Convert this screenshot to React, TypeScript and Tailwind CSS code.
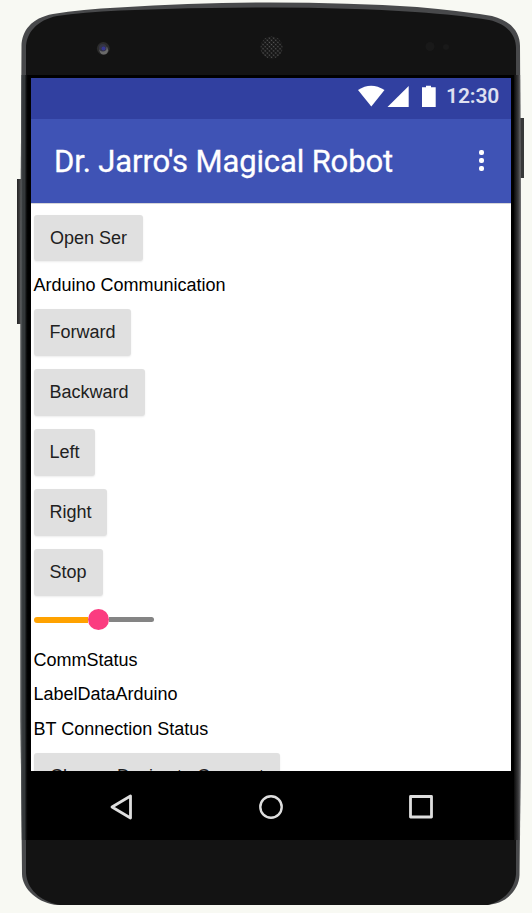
import React from 'react';

function PhoneBody() {
  return (
    <svg className="absolute inset-0" width="532" height="913" viewBox="0 0 532 913" aria-hidden="true">
      <defs>
        <linearGradient id="left" x1="0" x2="1" y1="0" y2="0">
          <stop offset="0" stopColor="#606365" />
          <stop offset="0.3" stopColor="#34383a" />
          <stop offset="0.55" stopColor="#34383a" />
          <stop offset="0.85" stopColor="#060606" />
          <stop offset="1" stopColor="#000" />
        </linearGradient>
        <linearGradient id="right" x1="0" x2="1" y1="0" y2="0">
          <stop offset="0" stopColor="#0b0b0b" />
          <stop offset="0.6" stopColor="#39393b" />
          <stop offset="1" stopColor="#747476" />
        </linearGradient>
        <linearGradient id="key" x1="0" x2="1" y1="0" y2="0">
          <stop offset="0" stopColor="#252525" />
          <stop offset="1" stopColor="#555656" />
        </linearGradient>
        <pattern id="mesh" width="3" height="3" patternUnits="userSpaceOnUse" patternTransform="rotate(45)">
          <rect width="3" height="3" fill="#151515" />
          <circle cx="1.5" cy="1.5" r="0.8" fill="#5c5c5c" />
        </pattern>
        <clipPath id="base">
          <rect width="532" height="905" />
        </clipPath>
      </defs>
      <rect x="17" y="179" width="5" height="145" fill="url(#key)" />
      <rect x="519" y="118" width="5" height="60" fill="#373838" />
      <g clipPath="url(#base)">
        <path
          d="M21.5 46 C22 31 31 18 53 14 Q82 9 119 7.500 Q195 2.500 270 2.500 Q350 2.500 417 7 Q462 11 492 16 C512 21 520 33 520 46 L521 240 V720 L519.500 875 C519 889 507 905 484 905 H58 C39 904 22 889 22 874 L20.500 720 V240 Z"
          fill="#48494b"
        />
        <path
          d="M26 48 C26 33 37 20 57 16 Q83 12 120 10.500 Q196 7.500 270 7.500 Q350 7.500 415 12 Q460 15 489 20 C508 24 516 36 516 48 L516 874 C515 890 501 905 480 906 H72 C44 906 27 891 26 873 Z"
          fill="#131313"
        />
        <path d="M21.300 75 H28 V840 H21.800 L20.500 720 V240 Z" fill="url(#left)" />
        <path d="M514 75 H520.200 L521 240 V720 L520 840 H514 Z" fill="url(#right)" />
      </g>
      <circle cx="103.300" cy="48.500" r="6.400" fill="#2b2b2b" />
      <circle cx="103.800" cy="50.300" r="4.300" fill="#6a6a6a" />
      <circle cx="102.800" cy="47.800" r="3.800" fill="#353545" />
      <circle cx="103.500" cy="48.500" r="2" fill="#363790" />
      <circle cx="271.500" cy="47.500" r="11" fill="url(#mesh)" />
      <circle cx="430" cy="46.500" r="4.500" fill="#191919" />
      <circle cx="446" cy="47" r="3" fill="#191919" />
    </svg>
  );
}

function StatusBar() {
  return (
    <div className="flex h-[41px] shrink-0 items-start justify-end bg-[#3140a0] pr-3 pt-[7px]">
      <svg width="80" height="22" viewBox="0 0 80 22" fill="#fff" className="mr-[9.5px]">
        <path d="M1 5 Q14 -3.500 27.500 5 L14.300 21.500 Z" />
        <path d="M51.700 1 V22 H30.500 Z" />
        <path d="M65 2.200 H69 V0.700 H74 V2.200 H78.700 V22 H65 Z" />
      </svg>
      <span className="w-[53px] whitespace-nowrap font-['Roboto',sans-serif] text-[21px] font-semibold leading-[23px] tracking-[-0.1px] text-[#dfe1f1]">
        12:30
      </span>
    </div>
  );
}

function TitleBar() {
  return (
    <header className="flex h-[84px] shrink-0 items-center justify-between bg-[#3f53b5] pl-[23px] pr-[27px]">
      <h1 className="mt-[2px] whitespace-nowrap font-['Roboto',sans-serif] text-[31px] leading-[36px] tracking-[-0.13px] text-white [-webkit-text-stroke:0.3px_white]">
        Dr. Jarro's Magical Robot
      </h1>
      <div className="-mt-[2px] flex flex-col gap-[3px]">
        <i className="h-[5px] w-[5px] rounded-[2px] bg-white" />
        <i className="h-[5px] w-[5px] rounded-[2px] bg-white" />
        <i className="h-[5px] w-[5px] rounded-[2px] bg-white" />
      </div>
    </header>
  );
}

function Button({ children, className }: { children: string; className: string }) {
  return (
    <button
      className={`shrink-0 whitespace-nowrap rounded-[3px] bg-[#e0e0e0] text-left text-[18px] text-[#212121] shadow-[0_1px_2px_rgba(0,0,0,0.08)] ${className}`}
    >
      {children}
    </button>
  );
}

function Label({ children, className }: { children: string; className: string }) {
  return (
    <p className={`-ml-[0.5px] shrink-0 whitespace-nowrap text-[18px] leading-[20px] text-black ${className}`}>
      {children}
    </p>
  );
}

function Slider() {
  return (
    <div className="mt-[13px] flex h-[21px] w-[120px] shrink-0 items-center">
      <div className="h-[6px] w-[54px] rounded-l-full bg-[#ffa200]" />
      <div className="size-[21px] rounded-full bg-[#fb3c80]" />
      <div className="h-[5px] flex-1 rounded-r-full bg-[#848484]" />
    </div>
  );
}

function NavBar() {
  return (
    <nav className="flex h-[69px] shrink-0 items-center justify-between bg-black px-[75px] pt-[1px]">
      <svg width="30" height="30" viewBox="0 0 30 30" fill="none" stroke="#dedede" strokeWidth="2.800" strokeLinejoin="round">
        <path d="M6 16 L24.500 5 V27 Z" />
      </svg>
      <svg width="30" height="30" viewBox="0 0 30 30" fill="none" stroke="#dedede" strokeWidth="2.400">
        <circle cx="15" cy="16" r="10.700" />
      </svg>
      <svg width="30" height="30" viewBox="0 0 30 30" fill="none" stroke="#dedede" strokeWidth="2.800" strokeLinejoin="round">
        <path d="M4.500 5.500 H25.500 V26 H4.500 Z" />
      </svg>
    </nav>
  );
}

export default function App() {
  return (
    <div className="relative h-[913px] w-[532px] overflow-hidden bg-[#f8f9f3] pl-7 pt-[75px] font-['Liberation_Sans',Arial,sans-serif]">
      <PhoneBody />
      <div className="relative flex h-[765px] w-[486px] flex-col bg-black px-[3px] pt-[3px]">
        <StatusBar />
        <TitleBar />
        <main className="flex h-[568px] shrink-0 flex-col items-start overflow-hidden border-t border-[#d5d5d8] bg-white pl-[3px] pt-[11px]">
          <Button className="h-[46px] w-[109px] pl-4 leading-[46px]">Open Ser</Button>
          <Label className="mt-[14px]">Arduino Communication</Label>
          <Button className="mt-[14px] h-[47px] w-[97px] pb-[1px] pl-[15.5px] leading-[45px]">Forward</Button>
          <Button className="mt-[13px] h-[47px] w-[111px] pb-[1px] pl-[15.5px] leading-[45px]">Backward</Button>
          <Button className="mt-[13px] h-[47px] w-[61px] pb-[1px] pl-[15.5px] leading-[45px]">Left</Button>
          <Button className="mt-[13px] h-[47px] w-[73px] pb-[1px] pl-[15.5px] leading-[45px]">Right</Button>
          <Button className="mt-[13px] h-[47px] w-[69px] pb-[1px] pl-[15.5px] leading-[45px]">Stop</Button>
          <Slider />
          <Label className="mt-[20px]">CommStatus</Label>
          <Label className="mt-[14px]">LabelDataArduino</Label>
          <Label className="mt-[15px]">BT Connection Status</Label>
          <Button className="mt-[14px] h-[47px] w-[246px] pb-[1px] pl-4 leading-[45px]">Choose Device to Connect</Button>
        </main>
        <NavBar />
      </div>
    </div>
  );
}
